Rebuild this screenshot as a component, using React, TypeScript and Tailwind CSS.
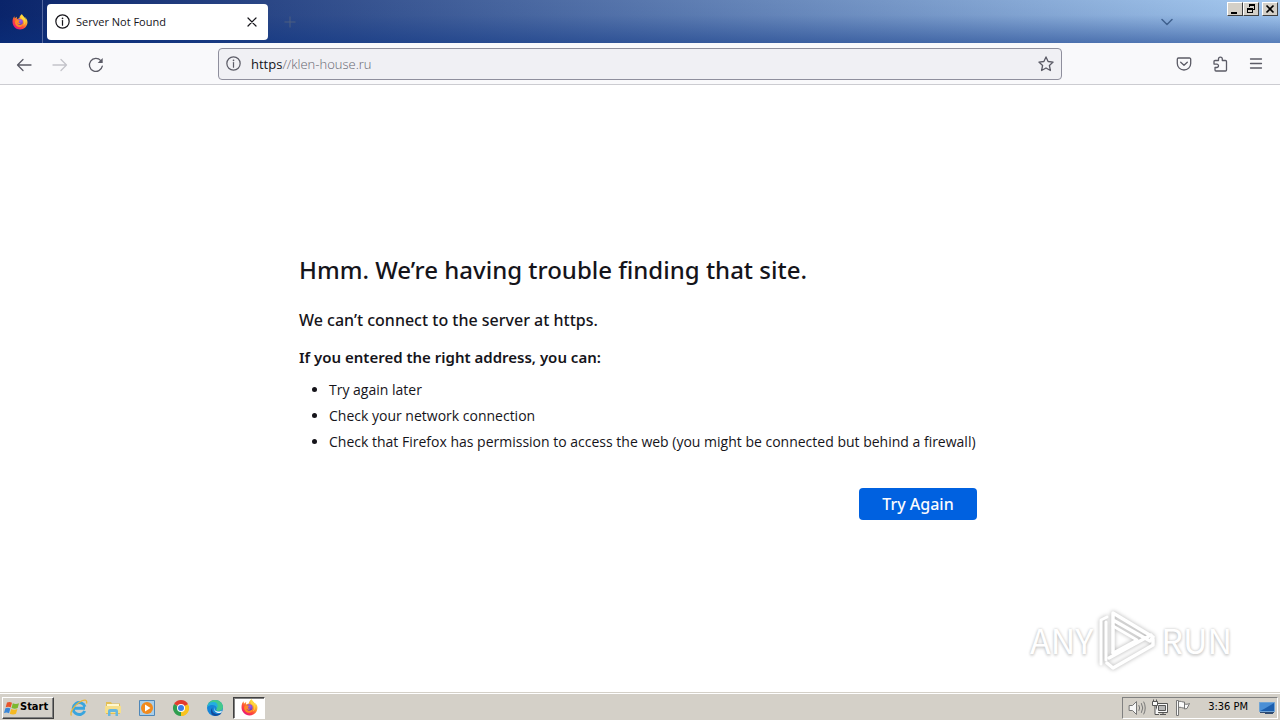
import React, { useState } from "react";
import type { ReactNode } from "react";

function InfoIcon({ className }: { className: string }) {
  return (
    <svg viewBox="0 0 16 16" className={className} fill="none" stroke="currentColor" strokeWidth="1.3">
      <circle cx="8" cy="8" r="7.1" />
      <path d="M8 7v5" strokeLinecap="round" />
      <circle cx="8" cy="4.6" r=".9" fill="currentColor" stroke="none" />
    </svg>
  );
}

function FirefoxIcon({ className, id }: { className: string; id: string }) {
  return (
    <svg viewBox="0 0 32 32" className={className}>
      <defs>
        <linearGradient id={`${id}-fire`} x1="0.85" y1="0.1" x2="0.2" y2="0.95">
          <stop offset="0" stopColor="#fff04a" />
          <stop offset=".35" stopColor="#ffa52b" />
          <stop offset=".65" stopColor="#ff4b3a" />
          <stop offset="1" stopColor="#e8137f" />
        </linearGradient>
        <radialGradient id={`${id}-globe`} cx=".6" cy=".3" r=".7">
          <stop offset="0" stopColor="#a75bf0" />
          <stop offset="1" stopColor="#5a3cc0" />
        </radialGradient>
      </defs>
      <path
        fill={`url(#${id}-fire)`}
        d="M29.5 11c-.8-1.9-2.3-3.8-3.5-4.5.9 1.8 1.4 3.5 1.6 4.8C25.7 6.5 22.4 4.7 19.8.5c-4 2-5 6.1-5.1 8.2-1.7.1-3 .7-4.2 1.5-.3-.3-.5-.4-.8-.6-.3-1.3-.2-2.8.3-4.1-1.9.9-3.3 2.2-4.3 3.4-.7-.9-.7-3.9-.6-4.500C2.500 6.200 1 10.400 1 15.500 1 24 7.500 31 16 31s14.800-6.300 15-14.500c0-2.100-.6-4-1.500-5.500z"
      />
      <circle cx="15.800" cy="16" r="6" fill={`url(#${id}-globe)`} />
      <path fill="#ff8a25" d="M6.500 13.500c2.300-2.300 5.500-2.400 7.300-.9l1.700.3c0 1.200-1.900 2-2.200 3-.3 1.900 2 2.900 4.200 2.100-1.800 3-5.700 3.200-7.500.2 1.400 4.900 8.400 5.400 11.200.9 1.500 3.800-2.500 7-6 6.900-5 0-9-4-9.200-8.500 0-1.500.1-2.900.5-4z" />
      <path fill="#ffd83d" d="M19.800.5c.4 4.500 5.700 6.500 6.900 11.500 1.200 5-1.700 9.900-5 11.500 6-6.200 3-12.300-2.500-13.900-1.500-2.500-1.200-6.200.6-9.100z" />
    </svg>
  );
}

function CloseGlyph({ className }: { className: string }) {
  return (
    <svg viewBox="0 0 10 10" className={className} stroke="currentColor" strokeWidth="1.200" strokeLinecap="round">
      <path d="M1 1l8 8M9 1L1 9" />
    </svg>
  );
}

function WindowButton({ label, children }: { label: string; children: ReactNode }) {
  return (
    <button
      aria-label={label}
      className="flex h-[14px] w-4 items-center justify-center border border-t-white border-r-[#404040] border-b-[#404040] border-l-white bg-[#d4d0c8] text-black"
    >
      {children}
    </button>
  );
}

function TabStrip() {
  return (
    <header className="flex h-[43px] bg-[linear-gradient(to_bottom,rgba(10,50,130,0)_0%,rgba(10,50,130,0.05)_35%,rgba(10,50,130,0.5)_100%),linear-gradient(to_right,#0a246a,#a6caf0)]">
      <div className="flex w-[43px] items-center justify-center border-r border-[#5468a0] pr-[2px]">
        <FirefoxIcon id="strip" className="size-4" />
      </div>
      <div className="ml-1 flex h-9 w-[221px] items-center self-center rounded bg-white pr-[10px] pl-2 text-[#15141a]">
        <InfoIcon className="size-[15px]" />
        <span className="ml-[6px] flex-1 pt-[2px] text-[11px]">Server Not Found</span>
        <button aria-label="Close tab" className="p-[1px]">
          <CloseGlyph className="size-[10px]" />
        </button>
      </div>
      <button aria-label="New tab" className="ml-4 text-[#4c5f80]">
        <svg viewBox="0 0 12 12" className="size-3" stroke="currentColor" strokeWidth="1">
          <path d="M6 .5v11M.5 6h11" />
        </svg>
      </button>
      <div className="ml-auto flex">
        <button aria-label="List all tabs" className="mr-[54px] text-[#40618f]">
          <svg viewBox="0 0 12 8" className="h-2 w-3" fill="none" stroke="currentColor" strokeWidth="1.500" strokeLinecap="round" strokeLinejoin="round">
            <path d="M1 1.500l5 5 5-5" />
          </svg>
        </button>
        <div className="flex pt-[2px] pr-[2px]">
          <WindowButton label="Minimize">
            <svg viewBox="0 0 10 10" className="size-[10px]">
              <path d="M1 8h6v2H1z" />
            </svg>
          </WindowButton>
          <WindowButton label="Restore">
            <svg viewBox="0 0 10 10" className="size-[10px]" fill="none" stroke="currentColor" shapeRendering="crispEdges">
              <path d="M3.500 3V.5h5v5H7M3 1.500h6M1.500 4.500h5v4h-5zM1 5.500h6" />
            </svg>
          </WindowButton>
          <div className="ml-[3px] flex">
            <WindowButton label="Close">
              <svg viewBox="0 0 10 10" className="size-[10px]" stroke="currentColor" strokeWidth="1.700">
                <path d="M1.500 1.500l7 7M8.500 1.500l-7 7" />
              </svg>
            </WindowButton>
          </div>
        </div>
      </div>
    </header>
  );
}

function ToolButton({ label, className, children }: { label: string; className?: string; children: ReactNode }) {
  return (
    <button aria-label={label} className={`flex size-9 items-center justify-center ${className ?? "text-[#5b5b66]"}`}>
      <svg viewBox="0 0 16 16" className="size-4" fill="none" stroke="currentColor" strokeWidth="1.300" strokeLinecap="round" strokeLinejoin="round">
        {children}
      </svg>
    </button>
  );
}

function NavBar() {
  const [address, setAddress] = useState("//klen-house.ru");
  return (
    <nav className="flex h-[42px] items-center justify-between border-b border-[#ccccd1] bg-[#f9f9fb] px-[6px]">
      <div className="flex w-[212px] pt-[2px]">
        <ToolButton label="Back">
          <path d="M15 8H1.500M7 2.500L1.500 8 7 13.500" />
        </ToolButton>
        <ToolButton label="Forward" className="text-[#c4c4ca]">
          <path d="M1 8h13.500M9 2.500L14.500 8 9 13.500" />
        </ToolButton>
        <ToolButton label="Reload">
          <path d="M14.300 9.200A6.500 6.500 0 1 1 12.800 3.600" />
          <path d="M14.700 1v5H9.700z" fill="currentColor" stroke="none" />
        </ToolButton>
      </div>
      <div className="flex h-8 flex-1 items-center rounded border border-[#8f8f9d] bg-[#f0f0f4] px-[7px] text-[#5b5b66]">
        <InfoIcon className="size-[15px]" />
        <label htmlFor="address" className="ml-[10px] text-[13px] leading-6 text-[#15141a]">https</label>
        <input
          id="address"
          value={address}
          onChange={(e) => setAddress(e.target.value)}
          className="h-6 min-w-0 flex-1 bg-transparent text-[13px] leading-6 font-light text-[#65656f] outline-none"
        />
        <button aria-label="Bookmark this page">
          <svg viewBox="0 0 16 16" className="size-4" fill="none" stroke="currentColor" strokeWidth="1.300" strokeLinejoin="round">
            <path d="M8 .9l2.100 4.600 5 .6-3.700 3.400 1 5L8 12l-4.400 2.500 1-5L.9 6.100l5-.6z" />
          </svg>
        </button>
      </div>
      <div className="flex w-[212px] justify-end">
        <ToolButton label="Save to Pocket">
          <path d="M2.500 2h11A1.200 1.200 0 0 1 14.700 3.200V7.500a6.700 6.500 0 0 1-13.400 0V3.200A1.200 1.200 0 0 1 2.500 2zM4.700 6.200L8 9.300l3.300-3.100" />
        </ToolButton>
        <ToolButton label="Extensions">
          <path d="M6.500 4.500V3a1.900 1.900 0 0 1 3.800 0v1.500h3.200a1 1 0 0 1 1 1V14a1 1 0 0 1-1 1H4a1 1 0 0 1-1-1v-2.500h1.800a1.700 1.700 0 0 0 0-3.400H2V5.500a1 1 0 0 1 1-1z" />
        </ToolButton>
        <ToolButton label="Open application menu">
          <path d="M2.500 3h11M2.500 7.500h11M2.500 12h11" />
        </ToolButton>
      </div>
    </nav>
  );
}

function Watermark() {
  return (
    <div className="absolute right-12 bottom-5 flex items-center gap-1 font-['Noto_Sans_CJK_JP',sans-serif] text-[34px] leading-[64px] font-normal text-white [text-shadow:0_0_3px_#c0c0c0,0_2px_3px_#d8d8d8]">
      <span>ANY</span>
      <svg viewBox="0 0 60 64" className="h-16 w-[60px] drop-shadow-[0_0_2px_#b0b0b0]" fill="none" stroke="white" strokeLinejoin="round" strokeLinecap="round">
        <path d="M4 56V12l6-3M9 52V14" strokeWidth="3" />
        <path d="M16 45V5l40 24-3 4-37-21" strokeWidth="3.500" />
        <path d="M12 50l42-23M10 55l6 5 40-23v-6" strokeWidth="3.500" />
        <path d="M16 45l24-13-24-14" strokeWidth="3" />
      </svg>
      <span>RUN</span>
    </div>
  );
}

const suggestions = [
  "Try again later",
  "Check your network connection",
  "Check that Firefox has permission to access the web (you might be connected but behind a firewall)",
];

function ErrorPage() {
  return (
    <main className="relative flex flex-1 justify-center bg-white pt-[169px] font-['Noto_Sans',sans-serif] text-[#15141a]">
      <section className="w-[682px]">
        <h1 className="text-[24px] leading-8 font-medium whitespace-nowrap">Hmm. We’re having trouble finding that site.</h1>
        <p className="mt-[22px] text-[16px] leading-6 font-medium">We can’t connect to the server at https.</p>
        <p className="mt-[13px] text-[15px] leading-6 font-semibold">If you entered the right address, you can:</p>
        <ul className="mt-2 list-disc pl-[30px] font-['Open_Sans',sans-serif] text-[14px] leading-[26px] whitespace-nowrap">
          {suggestions.map((s) => (
            <li key={s}>{s}</li>
          ))}
        </ul>
        <div className="mt-[33px] flex justify-end pr-1">
          <button className="h-8 w-[118px] rounded bg-[#0061e0] text-[16px] font-medium text-[#fbfbfe]">Try Again</button>
        </div>
      </section>
      <Watermark />
    </main>
  );
}

function StartLogo() {
  return (
    <svg viewBox="0 0 16 16" className="size-4">
      <path fill="#e8552c" d="M3 2.500c2-1 3.500-.7 5 .2L6.700 7.500C5 6.500 3.500 6.500 1.700 7.300z" />
      <path fill="#7cb82f" d="M8.800 3.200c2 1.100 4 1 6.200 0L13.700 8c-2 1-4 .9-6.200-.1z" />
      <path fill="#3a87d8" d="M1.400 8.300c2-.9 3.500-.7 5 .2L5 13.300c-1.600-1-3.200-1-5-.2z" />
      <path fill="#f5b921" d="M7.200 9c2 1 4 1 6.200 0L12 13.800c-2 1-4 .9-6.200-.1z" />
    </svg>
  );
}

function ExplorerIcon() {
  return (
    <svg viewBox="0 0 18 18" className="size-[18px]" fill="none">
      <path d="M14.700 12a6 6 0 1 1 .2-4.300M4 9.300h11" stroke="#3aa5de" strokeWidth="3" />
      <path d="M1.500 16.500C-.5 14 3.500 7 9 3.500s8.500-3 7.500 1" stroke="#e8b63d" strokeWidth="1.300" />
    </svg>
  );
}

function FolderIcon() {
  return (
    <svg viewBox="0 0 18 18" className="size-[18px]">
      <path fill="#e3bf55" d="M2 3h5l1 1.500h8V15H2z" />
      <path fill="#fff7cf" d="M3 5h12v3H3z" />
      <path fill="#f6df8b" d="M1 7h16v7H1z" />
      <path fill="#67b7df" d="M4 17v-5q0-2 2-2h6q2 0 2 2v5h-2.500v-4h-5v4z" />
    </svg>
  );
}

function MediaIcon() {
  return (
    <svg viewBox="0 0 18 18" className="size-[18px]">
      <path fill="#a9cee9" stroke="#4f87b8" d="M1.500 1.500h15v15h-15z" />
      <circle cx="9" cy="9" r="6" fill="#f28a1c" />
      <path fill="#fff" d="M7 5.500l5.500 3.500L7 12.500z" />
    </svg>
  );
}

function ChromeIcon() {
  return (
    <svg viewBox="0 0 18 18" className="size-[18px]">
      <path fill="#e33b2e" d="M9 9L2.070 5A8 8 0 0 1 15.930 5z" />
      <path fill="#f9c31f" d="M9 9L15.930 5A8 8 0 0 1 9 17z" />
      <path fill="#2f9e4f" d="M9 9v8A8 8 0 0 1 2.070 5z" />
      <path fill="#e33b2e" d="M9 5h6.930L9 9z" />
      <path fill="#f9c31f" d="M12.500 7h4.200a8 8 0 0 1-7.700 10l3.460-6z" />
      <circle cx="9" cy="9" r="4" fill="#fff" />
      <circle cx="9" cy="9" r="3" fill="#3b7de8" />
    </svg>
  );
}

function EdgeIcon() {
  return (
    <svg viewBox="0 0 18 18" className="size-[18px]">
      <circle cx="9" cy="9" r="8" fill="#1685d8" />
      <path fill="#43c98c" d="M1.200 8C2 3.500 5 1 9 1c5 0 8 3.500 8 7 0 2.700-2.200 4-4.500 4-2 0-2.600-.7-2.200-1.500 1.500-2.500-.5-5-3.500-5C4 5.500 2 6.500 1.200 8z" />
      <path fill="#23aee0" d="M1.200 8C2 4.500 4.500 2.500 8 3c3.500.5 4.500 4 3 6-1-3-6-4.500-9.800-1z" />
      <path fill="#124c9c" d="M6.500 8.500c-1.500 4 2 7 6 6.500 1.300-.2 2.200-.6 3-1-1.500 2.200-4 3-6.500 3-4-.5-5.500-5.500-2.500-8.500z" />
      <path fill="#eef8fb" d="M9 8c-1.200 2-.2 4.300 3 4.400 1.700.1 3-.4 4-1-.2 1-.8 2-1.300 2.400-4 1.200-8.200-2.500-5.700-5.800z" />
    </svg>
  );
}

function VolumeIcon() {
  return (
    <svg viewBox="0 0 18 16" className="h-4 w-[18px]" fill="none" stroke="#777" strokeLinecap="round">
      <path fill="#f7f7f7" strokeLinejoin="round" d="M1.500 5.500h3l4-4v13l-4-4h-3z" />
      <path d="M11 5.500q1.500 2.500 0 5M13.500 3.500q2.700 4.500 0 9M15.800 2q3 6 0 12" />
    </svg>
  );
}

function NetworkIcon() {
  return (
    <svg viewBox="0 0 18 18" className="size-[18px]" fill="#f8f8f8" stroke="#555">
      <path d="M5.500 4.500h11v9h-11z" />
      <path fill="#b7b7b7" d="M7.500 6.500h7v5h-7z" />
      <path d="M1.500 2.500h5v4h-5zM2.500.5v2M5.500.5v2M4 6.500v9h4M9 15.500h6M12 13.500v2" />
    </svg>
  );
}

function FlagIcon() {
  return (
    <svg viewBox="0 0 18 18" className="size-[18px]" fill="#fbfbfb" stroke="#777" strokeLinejoin="round">
      <path d="M4.500 2.500c2-1 4 1 6 .5v6c-2 .5-4-1.500-6-.5zM10.500 5c2 .5 3 .3 5-.5L13 9.500l-2.500.5z" />
      <path d="M2.500 1.500h2v15h-2z" />
    </svg>
  );
}

const pinned = [
  { name: "Internet Explorer", icon: <ExplorerIcon /> },
  { name: "Windows Explorer", icon: <FolderIcon /> },
  { name: "Media Player", icon: <MediaIcon /> },
  { name: "Chrome", icon: <ChromeIcon /> },
  { name: "Edge", icon: <EdgeIcon /> },
];

function Taskbar() {
  return (
    <footer className="flex h-7 items-center border-t border-[#d4d0c8] bg-[#d4d0c8] px-[2px] pt-[2px] font-['DejaVu_Sans_Condensed',sans-serif] text-black shadow-[inset_0_1px_0_#ffffff]">
      <button className="flex h-[22px] w-[52px] items-center border border-t-white border-r-[#404040] border-b-[#404040] border-l-white pl-[1px] text-[11px] font-bold shadow-[inset_-1px_-1px_0_#808080]">
        <StartLogo />
        Start
      </button>
      <div className="ml-2 flex">
        {pinned.map((app) => (
          <button key={app.name} aria-label={app.name} className="flex h-[22px] w-[34px] items-center justify-center">
            {app.icon}
          </button>
        ))}
        <button
          aria-label="Firefox"
          className="ml-[1px] flex h-[22px] w-8 items-center justify-center border border-t-[#404040] border-r-white border-b-white border-l-[#404040] bg-white shadow-[inset_1px_1px_0_#808080]"
        >
          <FirefoxIcon id="task" className="size-[17px]" />
        </button>
      </div>
      <div className="ml-auto flex h-[22px] items-center border border-t-[#808080] border-r-white border-b-white border-l-[#808080] pl-[5px]">
        <VolumeIcon />
        <span className="ml-[5px]"><NetworkIcon /></span>
        <span className="ml-[5px]"><FlagIcon /></span>
        <time className="ml-4 text-[11px]">3:36 PM</time>
        <button aria-label="Show desktop" className="mr-[2px] ml-[11px]">
          <svg viewBox="0 0 16 16" className="size-4">
            <path fill="#1d5fae" stroke="#6fa4d6" d="M.5 2.500h15v9H.5z" />
            <path fill="#4a8fd6" d="M1 3h14L5 9 1 11z" />
            <path fill="#304b70" d="M1 12h14v1H1zM6 13h8v1H6z" />
          </svg>
        </button>
      </div>
    </footer>
  );
}

export default function App() {
  return (
    <div className="flex min-h-screen flex-col bg-white font-['Open_Sans',sans-serif]">
      <TabStrip />
      <NavBar />
      <ErrorPage />
      <Taskbar />
    </div>
  );
}
